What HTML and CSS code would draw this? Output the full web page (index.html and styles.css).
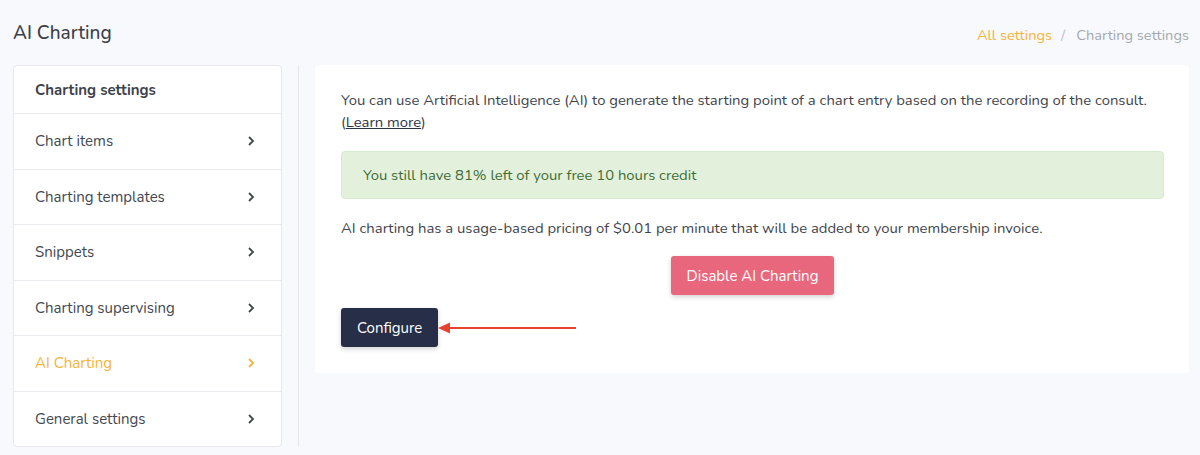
FILE: index.html
```html
<!DOCTYPE html>
<html>
<head>
<meta charset="utf-8">
<link rel="stylesheet" href="styles.css">
</head>
<body>
<div class="page">
  <header class="topbar">
    <h1 class="title">AI Charting</h1>
    <nav class="crumbs"><a class="crumb-link">All settings</a><span class="sep">/</span><span class="crumb-current">Charting settings</span></nav>
  </header>
  <div class="layout">
    <aside class="sidebar">
      <div class="side-head">Charting settings</div>
      <div class="side-item"><span>Chart items</span><svg class="chev" viewBox="0 0 8 12"><path d="M2 2l4 4-4 4"/></svg></div>
      <div class="side-item"><span>Charting templates</span><svg class="chev" viewBox="0 0 8 12"><path d="M2 2l4 4-4 4"/></svg></div>
      <div class="side-item"><span>Snippets</span><svg class="chev" viewBox="0 0 8 12"><path d="M2 2l4 4-4 4"/></svg></div>
      <div class="side-item"><span>Charting supervising</span><svg class="chev" viewBox="0 0 8 12"><path d="M2 2l4 4-4 4"/></svg></div>
      <div class="side-item active"><span>AI Charting</span><svg class="chev" viewBox="0 0 8 12"><path d="M2 2l4 4-4 4"/></svg></div>
      <div class="side-item last"><span>General settings</span><svg class="chev" viewBox="0 0 8 12"><path d="M2 2l4 4-4 4"/></svg></div>
    </aside>
    <div class="divider"></div>
    <main class="card">
      <p class="intro">You can use Artificial Intelligence (AI) to generate the starting point of a chart entry based on the recording of the consult.<br>(<a class="learn">Learn more</a>)</p>
      <div class="alert">You still have 81% left of your free 10 hours credit</div>
      <p class="pricing">AI charting has a usage-based pricing of $0.01 per minute that will be added to your membership invoice.</p>
      <div class="center-row"><button class="btn btn-danger">Disable AI Charting</button></div>
      <div class="config-row">
        <button class="btn btn-dark">Configure</button>
        <svg class="arrow" viewBox="0 0 140 12" width="140" height="12"><path d="M10 6H138" stroke="#e5432d" stroke-width="2"/><path d="M0 6L12 0.5V11.5Z" fill="#e5432d"/></svg>
      </div>
    </main>
  </div>
</div>
</body>
</html>
```
FILE: styles.css
```css
html, body {
  margin: 0;
  padding: 0;
  background: #f8f9fc;
}
body {
  font-family: "Nunito", "Lato", "Open Sans", sans-serif;
  color: #3f444c;
}
.page {
  padding: 0 11px 0 13px;
}
.topbar {
  height: 65px;
  display: flex;
  align-items: center;
  justify-content: space-between;
}
.title {
  margin: 0;
  font-size: 19px;
  font-weight: 500;
  color: #3b414a;
}
.crumbs {
  font-size: 14.6px;
  display: flex;
  align-items: center;
  position: relative;
  top: 2px;
}
.crumb-link { color: #f4b43a; }
.sep { color: #b8bcc2; margin: 0 11px 0 9px; }
.crumb-current { color: #a4a9b0; }
.layout {
  display: grid;
  grid-template-columns: 269px 1px 874px;
  column-gap: 16px;
  align-items: start;
}
.sidebar {
  background: #fff;
  border: 1px solid #e6e8ec;
  border-radius: 4px;
  font-size: 15px;
}
.side-head {
  display: flex;
  align-items: center;
  padding-left: 21px;
  font-weight: 700;
  color: #3d424a;
  border-bottom: 1px solid #e9ebef;
  box-sizing: border-box;
  height: 48px;
}
.side-item {
  height: 55.5px;
  box-sizing: border-box;
  display: flex;
  align-items: center;
  justify-content: space-between;
  padding: 0 26px 0 21px;
  border-bottom: 1px solid #e9ebef;
  color: #434850;
}
.side-item.last { border-bottom: none; height: 54px; }
.side-item.active { color: #f4b43a; }
.chev {
  width: 8px;
  height: 12px;
  fill: none;
  stroke: currentColor;
  stroke-width: 1.8;
}
.divider {
  background: #e4e6ea;
  height: 382px;
}
.card {
  background: #fff;
  border-radius: 4px;
  padding: 24px 25px 26px 26px;
  font-size: 14.85px;
  line-height: 22px;
  color: #3f444c;
  position: relative;
}
.intro { margin: 0; }
.learn { color: #2d3445; text-decoration: underline; }
.alert {
  margin-top: 18px;
  background: #e3f1dc;
  border: 1px solid #d6ead0;
  border-radius: 4px;
  color: #3f6d36;
  padding: 12px 21px;
}
.pricing { margin: 18px 0 0 0; }
.center-row {
  display: flex;
  justify-content: center;
  margin-top: 17px;
}
.btn {
  font-family: inherit;
  font-size: 15px;
  border: none;
  border-radius: 3px;
  color: #fff;
  height: 39px;
  padding: 0 16px;
  box-shadow: 0 2px 5px rgba(0,0,0,0.18);
}
.btn-danger { background: #e8677c; }
.btn-dark { background: #262f47; }
.config-row {
  margin-top: 13px;
  position: relative;
  display: flex;
}
.arrow {
  position: absolute;
  left: 97px;
  top: 14px;
}
```
